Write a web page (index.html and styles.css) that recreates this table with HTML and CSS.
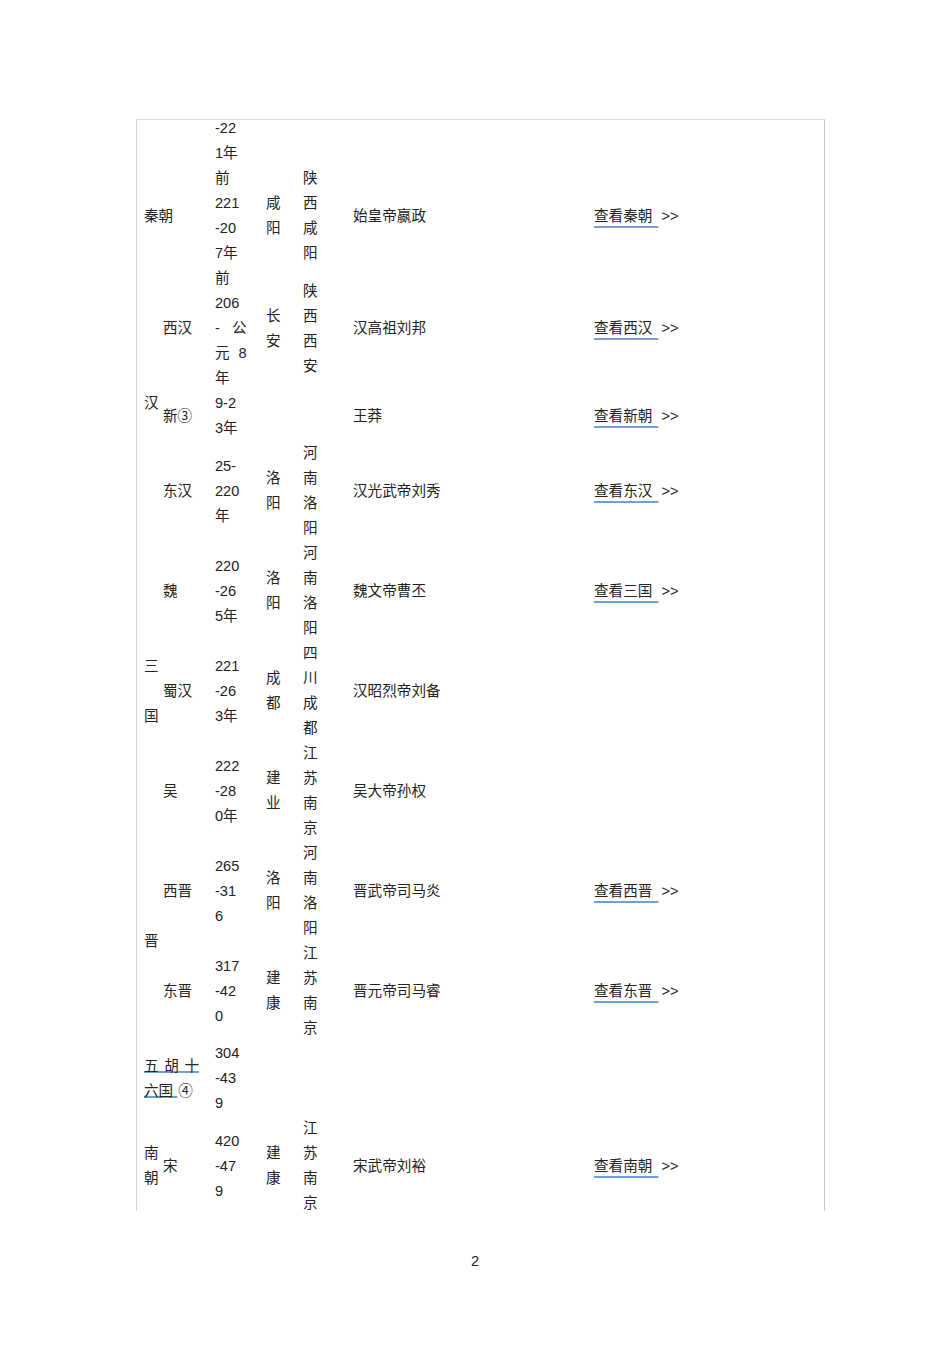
FILE: index.html
```html
<!DOCTYPE html>
<html lang="zh-CN">
<head>
<meta charset="utf-8">
<title>中国历代王朝</title>
<link rel="stylesheet" href="styles.css">
</head>
<body>
<main class="page">
  <div class="frame">
    <table class="tbl">
      <colgroup>
        <col class="w1"><col class="w2"><col class="w3"><col class="w4"><col class="w5"><col class="w6"><col class="w7">
      </colgroup>
      <tbody>
        <tr>
          <td colspan="2"></td>
          <td><div>-22</div><div>1年</div></td>
          <td></td><td></td><td></td><td></td>
        </tr>
        <tr>
          <td colspan="2">秦朝</td>
          <td><div>前</div><div>221</div><div>-20</div><div>7年</div></td>
          <td><div>咸</div><div>阳</div></td>
          <td><div>陕</div><div>西</div><div>咸</div><div>阳</div></td>
          <td>始皇帝嬴政</td>
          <td><a class="lnk" href="#qin">查看秦朝 </a><span class="gt">&gt;&gt;</span></td>
        </tr>
        <tr>
          <td rowspan="3">汉</td>
          <td>西汉</td>
          <td><div>前</div><div>206</div><div class="jl">- 公</div><div class="jl">元 8</div><div>年</div></td>
          <td><div>长</div><div>安</div></td>
          <td><div>陕</div><div>西</div><div>西</div><div>安</div></td>
          <td>汉高祖刘邦</td>
          <td><a class="lnk" href="#xihan">查看西汉 </a><span class="gt">&gt;&gt;</span></td>
        </tr>
        <tr>
          <td>新③</td>
          <td><div>9-2</div><div>3年</div></td>
          <td></td>
          <td></td>
          <td>王莽</td>
          <td><a class="lnk" href="#xin">查看新朝 </a><span class="gt">&gt;&gt;</span></td>
        </tr>
        <tr>
          <td>东汉</td>
          <td><div>25-</div><div>220</div><div>年</div></td>
          <td><div>洛</div><div>阳</div></td>
          <td><div>河</div><div>南</div><div>洛</div><div>阳</div></td>
          <td>汉光武帝刘秀</td>
          <td><a class="lnk" href="#donghan">查看东汉 </a><span class="gt">&gt;&gt;</span></td>
        </tr>
        <tr>
          <td rowspan="3"><div>三</div><div>&nbsp;</div><div>国</div></td>
          <td>魏</td>
          <td><div>220</div><div>-26</div><div>5年</div></td>
          <td><div>洛</div><div>阳</div></td>
          <td><div>河</div><div>南</div><div>洛</div><div>阳</div></td>
          <td>魏文帝曹丕</td>
          <td><a class="lnk" href="#sanguo">查看三国 </a><span class="gt">&gt;&gt;</span></td>
        </tr>
        <tr>
          <td>蜀汉</td>
          <td><div>221</div><div>-26</div><div>3年</div></td>
          <td><div>成</div><div>都</div></td>
          <td><div>四</div><div>川</div><div>成</div><div>都</div></td>
          <td>汉昭烈帝刘备</td>
          <td></td>
        </tr>
        <tr>
          <td>吴</td>
          <td><div>222</div><div>-28</div><div>0年</div></td>
          <td><div>建</div><div>业</div></td>
          <td><div>江</div><div>苏</div><div>南</div><div>京</div></td>
          <td>吴大帝孙权</td>
          <td></td>
        </tr>
        <tr>
          <td rowspan="2">晋</td>
          <td>西晋</td>
          <td><div>265</div><div>-31</div><div>6</div></td>
          <td><div>洛</div><div>阳</div></td>
          <td><div>河</div><div>南</div><div>洛</div><div>阳</div></td>
          <td>晋武帝司马炎</td>
          <td><a class="lnk" href="#xijin">查看西晋 </a><span class="gt">&gt;&gt;</span></td>
        </tr>
        <tr>
          <td>东晋</td>
          <td><div>317</div><div>-42</div><div>0</div></td>
          <td><div>建</div><div>康</div></td>
          <td><div>江</div><div>苏</div><div>南</div><div>京</div></td>
          <td>晋元帝司马睿</td>
          <td><a class="lnk" href="#dongjin">查看东晋 </a><span class="gt">&gt;&gt;</span></td>
        </tr>
        <tr>
          <td colspan="2"><div class="wuhu"><a class="lnk2" href="#wuhu">五胡十</a><a class="lnk2" href="#wuhu">六国 </a><span class="note">④</span></div></td>
          <td><div>304</div><div>-43</div><div>9</div></td>
          <td></td><td></td><td></td><td></td>
        </tr>
        <tr>
          <td><div>南</div><div>朝</div></td>
          <td>宋</td>
          <td><div>420</div><div>-47</div><div>9</div></td>
          <td><div>建</div><div>康</div></td>
          <td><div>江</div><div>苏</div><div>南</div><div>京</div></td>
          <td>宋武帝刘裕</td>
          <td><a class="lnk" href="#nanchao">查看南朝 </a><span class="gt">&gt;&gt;</span></td>
        </tr>
      </tbody>
    </table>
  </div>
  <footer class="pageno">2</footer>
</main>
</body>
</html>
```

FILE: styles.css
```css
html, body {
  margin: 0;
  padding: 0;
  background: #ffffff;
}

body {
  font-family: "Liberation Sans", "Noto Sans CJK SC", sans-serif;
  font-size: 14.6px;
  line-height: 25px;
  color: #232323;
}

.page {
  padding-top: 119px;
}

.frame {
  margin-left: 136px;
  width: 689px;
  height: 1092px;
  box-sizing: border-box;
  border-top: 1px solid #dcdcdc;
  border-left: 1px solid #d2d2d2;
  border-right: 1px solid #cacaca;
  padding-left: 7px;
  overflow: hidden;
}

.tbl {
  margin-top: -4px;
  width: 680px;
  border-collapse: collapse;
  table-layout: fixed;
}

.w1 { width: 19px; }
.w2 { width: 52px; }
.w3 { width: 51px; }
.w4 { width: 37px; }
.w5 { width: 50px; }
.w6 { width: 241px; }
.w7 { width: 230px; }

.tbl td {
  padding: 0;
  vertical-align: middle;
  text-align: left;
  white-space: nowrap;
}

.jl {
  width: 31.5px;
  text-align: justify;
  text-align-last: justify;
}

.lnk {
  color: inherit;
  text-decoration-line: underline;
  text-decoration-color: #6f9fd8;
  text-decoration-thickness: 2px;
  text-underline-offset: 5px;
  word-spacing: 2px;
}

.gt {
  margin-left: 3px;
}

.wuhu {
  width: 55px;
  white-space: normal;
  text-align: justify;
}

.lnk2 {
  color: inherit;
  text-decoration-line: underline;
  text-decoration-color: #6f9fd8;
  text-decoration-thickness: 2px;
  text-underline-offset: 0px;
}

.note {
  margin-left: 1px;
}

.pageno {
  margin-top: 38px;
  text-align: center;
}
```
